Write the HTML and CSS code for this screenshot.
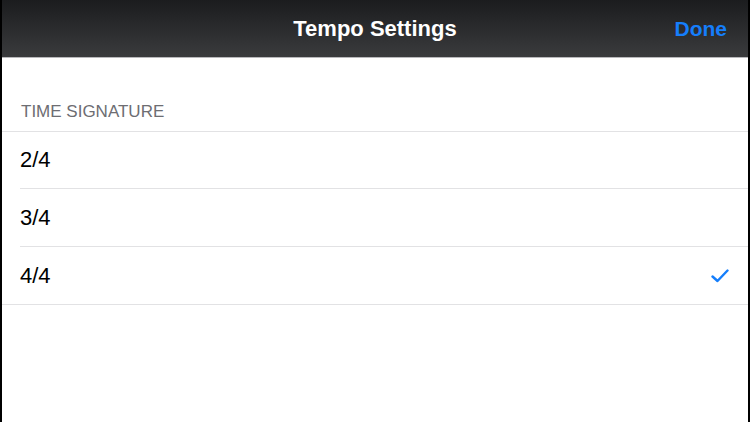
FILE: index.html
```html
<!DOCTYPE html>
<html lang="en">
<head>
    <meta charset="UTF-8">
    <meta name="viewport" content="width=device-width, initial-scale=1.0">
    <title>Tempo Settings</title>
    <link rel="stylesheet" href="styles.css">
</head>
<body>
    <div class="screen">

        <div class="navbar">
            <span class="nav-side"></span>
            <h1 class="nav-title">Tempo Settings</h1>
            <a href="#" class="nav-side done">Done</a>
        </div>

        <div class="content">
            <div class="section-header">TIME SIGNATURE</div>
            <ul class="list">
                <li class="row"><span>2/4</span></li>
                <li class="row"><span>3/4</span></li>
                <li class="row selected">
                    <span>4/4</span>
                    <svg class="check" width="18" height="14" viewBox="0 0 18 14">
                        <path d="M1.5 7.5 L6.5 12 L16.5 1.5" fill="none" stroke="#157efb" stroke-width="2.4" stroke-linecap="round" stroke-linejoin="round"/>
                    </svg>
                </li>
            </ul>
        </div>

    </div>
</body>
</html>
```

FILE: styles.css
```css
body {
    margin: 0;
    font-family: "Liberation Sans", Arial, sans-serif;
    background-color: #fff;
}

.screen {
    height: 422px;
    border-left: 2px solid #000;
    border-right: 2px solid #000;
    display: flex;
    flex-direction: column;
    overflow: hidden;
}


.navbar {
    height: 57px;
    display: flex;
    align-items: center;
    justify-content: space-between;
    padding: 0 21px 0 20px;
    background: linear-gradient(#1b1c1e, #3a3b3d);
    border-bottom: 1px solid #b8b8bb;
}

.nav-title {
    margin: 0;
    color: #fff;
    font-size: 22px;
    font-weight: bold;
    padding-left: 1px;
}

.nav-side {
    width: 60px;
}

.done {
    color: #157efb;
    font-size: 21px;
    font-weight: bold;
    text-decoration: none;
    text-align: right;
}


.content {
    flex: 1;
    background-color: #fff;
}

.section-header {
    padding: 44px 19px 9px;
    color: #6d6d72;
    font-size: 17px;
    line-height: 20px;
}

.list {
    list-style: none;
    margin: 0;
    padding: 0;
    border-top: 1px solid #e2e2e4;
    border-bottom: 1px solid #e2e2e4;
}

.row {
    height: 57px;
    display: flex;
    align-items: center;
    justify-content: space-between;
    margin-left: 18px;
    padding-right: 19px;
    font-size: 22px;
    color: #000;
}

.row:first-child {
    height: 56px;
}

.row + .row {
    border-top: 1px solid #e2e2e4;
}

.check {
    display: block;
}
```
